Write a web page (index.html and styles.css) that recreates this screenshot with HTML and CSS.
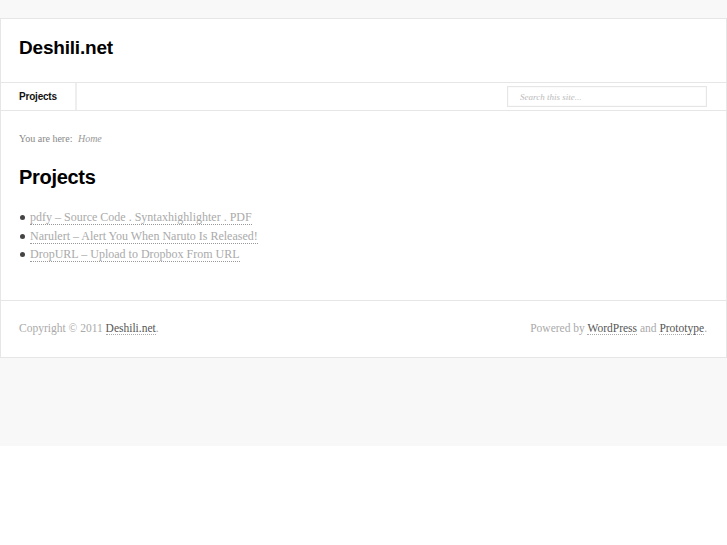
FILE: index.html
```html
<!DOCTYPE html>
<html lang="en">
<head>
  <meta charset="UTF-8">
  <title>Deshili.net | Projects</title>
  <link rel="stylesheet" href="styles.css">
</head>
<body>
  <div class="wrap">
    <div class="header">
      <h2 class="site-title"><a href="#">Deshili.net</a></h2>
    </div>
    <div class="nav">
      <ul class="menu">
        <li class="current"><a href="#">Projects</a></li>
      </ul>
      <form class="search">
        <input type="text" placeholder="Search this site...">
      </form>
    </div>
    <div class="content">
      <p class="crumbs">You are here: <a href="#">Home</a></p>
      <h1 class="page-title">Projects</h1>
      <ul class="projects">
        <li><a href="#">pdfy &#8211; Source Code . Syntaxhighlighter . PDF</a></li>
        <li><a href="#">Narulert &#8211; Alert You When Naruto Is Released!</a></li>
        <li><a href="#">DropURL &#8211; Upload to Dropbox From URL</a></li>
      </ul>
    </div>
    <div class="footer">
      <p>Copyright &copy; 2011 <a href="#">Deshili.net</a>.</p>
      <p>Powered by <a href="#">WordPress</a> and <a href="#">Prototype</a>.</p>
    </div>
  </div>
</body>
</html>
```

FILE: styles.css
```css
* {
  margin: 0;
  padding: 0;
  box-sizing: border-box;
}

html {
  background-color: #fff;
}

body {
  padding: 18px 0 88px;
  background-color: #f8f8f8;
  color: #999;
  font-family: "Liberation Serif", serif;
  font-size: 13px;
}

ul {
  list-style: none;
}

a {
  text-decoration: none;
}

.wrap {
  width: 727px;
  background-color: #fff;
  border: 1px solid #e6e6e6;
}

.header {
  height: 63px;
  padding: 0 18px;
  display: flex;
  align-items: center;
}

.site-title {
  font-family: "Liberation Sans", sans-serif;
  font-size: 19px;
  font-weight: 700;
  letter-spacing: -0.2px;
  margin-top: -5px;
}

.site-title a {
  color: #000;
}

.nav {
  display: flex;
  align-items: center;
  justify-content: space-between;
  height: 29px;
  border-top: 1px solid #e6e6e6;
  border-bottom: 1px solid #e6e6e6;
}

.menu {
  display: flex;
  height: 100%;
}

.menu li {
  display: flex;
  align-items: center;
  padding: 0 18px 0 18px;
  border-right: 2px solid #eee;
}

.menu a {
  color: #111;
  font-family: "Liberation Sans", sans-serif;
  font-size: 10px;
  font-weight: 700;
  letter-spacing: -0.2px;
}

.search {
  margin-right: 19px;
}

.search input {
  width: 200px;
  height: 21px;
  padding: 0 12px;
  border: 1px solid #e6e6e6;
  box-shadow: inset 0 0 2px #f0f0f0;
  outline: none;
  font-family: "Liberation Serif", serif;
  font-style: italic;
  font-size: 9px;
  color: #999;
}

.search input::placeholder {
  color: #bbb;
}

.content {
  padding: 20px 18px 36px;
}

.crumbs {
  font-size: 10px;
  color: #888;
  line-height: 16px;
}

.crumbs a {
  color: #999;
  font-style: italic;
  margin-left: 3px;
}

.page-title {
  margin-top: 17px;
  font-family: "Liberation Sans", sans-serif;
  font-size: 20px;
  font-weight: 700;
  color: #000;
  letter-spacing: -0.3px;
  line-height: 26px;
}

.projects {
  margin-top: 18px;
}

.projects li {
  font-size: 12px;
  line-height: 18.5px;
  padding-left: 11px;
  position: relative;
}

.projects li::before {
  content: "";
  position: absolute;
  left: 1px;
  top: 7px;
  width: 5px;
  height: 5px;
  border-radius: 50%;
  background-color: #444;
}

.projects a {
  color: #aaa;
  border-bottom: 1px dotted #999;
}

.footer {
  display: flex;
  justify-content: space-between;
  height: 57px;
  padding: 19px 19px 0 18px;
  border-top: 1px solid #e6e6e6;
  font-size: 11.5px;
  color: #aaa;
}

.footer p {
  line-height: 16px;
}

.footer a {
  color: #555;
  border-bottom: 1px dotted #aaa;
}
```
